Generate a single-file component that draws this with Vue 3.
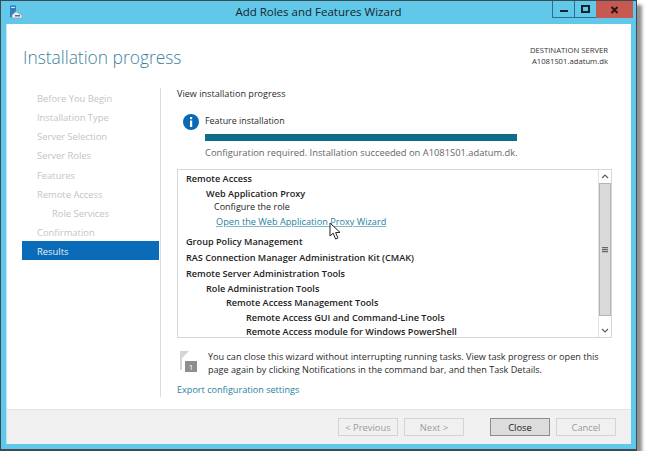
<template>
  <div class="window">
    <!-- title bar -->
    <div class="titlebar">
      <svg class="app-icon" width="14" height="14" viewBox="0 0 14 14">
        <rect x="1" y="0.5" width="6" height="12" fill="#2f7fc1" />
        <rect x="2" y="2" width="4" height="1" fill="#cfe6f5" />
        <path d="M3 13 L3 10 L7 6.5 L13 10.5 L13 13 Z" fill="#e8eef2" stroke="#8a9aa6" stroke-width="0.6" />
        <rect x="6" y="10" width="5" height="1.5" fill="#5a6a76" />
      </svg>
      <span class="title">Add Roles and Features Wizard</span>
      <div class="controls">
        <div class="ctl"><span class="min-glyph"></span></div>
        <div class="ctl"><span class="max-glyph"></span></div>
        <div class="ctl close-ctl">
          <svg width="9" height="8" viewBox="0 0 9 8"><path d="M1.5 1 L7.5 7 M7.5 1 L1.5 7" stroke="#2b1513" stroke-width="2" /></svg>
        </div>
      </div>
    </div>

    <div class="client">
      <div class="head">
        <h1>Installation progress</h1>
        <div class="dest">
          <div>DESTINATION SERVER</div>
          <div>A1081S01.adatum.dk</div>
        </div>
      </div>

      <div class="main">
        <nav class="nav">
          <div
            v-for="step in steps"
            :key="step.label"
            class="step"
            :class="{ sub: step.sub, active: step.active }"
          >{{ step.label }}</div>
        </nav>

        <div class="content">
          <div class="lead">View installation progress</div>

          <div class="feature">
            <svg class="info" width="16" height="16" viewBox="0 0 16 16">
              <circle cx="8" cy="8" r="8" fill="#0a68b4" />
              <rect x="7" y="3" width="2.2" height="2.2" fill="#fff" />
              <rect x="7" y="6.5" width="2.2" height="6.5" fill="#fff" />
            </svg>
            <div class="feature-body">
              <div class="feature-name">Feature installation</div>
              <div class="bar"></div>
              <div class="status">Configuration required. Installation succeeded on A1081S01.adatum.dk.</div>
            </div>
          </div>

          <div class="box">
            <div class="list">
              <div
                v-for="row in rows"
                :key="row.text"
                class="row"
                :class="row.cls"
              >{{ row.text }}</div>
            </div>
            <div class="scrollbar">
              <div class="arrow">
                <svg width="8" height="5" viewBox="0 0 8 5"><path d="M1 4 L4 1 L7 4" fill="none" stroke="#606060" stroke-width="1.2" /></svg>
              </div>
              <div class="thumb"><span class="grip"></span></div>
              <div class="track"></div>
              <div class="arrow">
                <svg width="8" height="5" viewBox="0 0 8 5"><path d="M1 1 L4 4 L7 1" fill="none" stroke="#606060" stroke-width="1.2" /></svg>
              </div>
            </div>
            <svg class="cursor" width="13" height="19" viewBox="0 0 13 19">
              <path d="M1 1 L1 14 L4.2 11.2 L6.6 17 L9 16 L6.6 10.6 L11 10.4 Z" fill="#fff" stroke="#222" stroke-width="1" />
            </svg>
          </div>

          <div class="note">
            <svg class="flag" width="19" height="22" viewBox="0 0 19 22">
              <path d="M1 1 L10 1 L3 8 L3 20 L1 20 Z" fill="#d4d4d4" />
              <rect x="6" y="11" width="12" height="11" fill="#8e8e8e" />
              <text x="12" y="20" font-size="8" fill="#fff" text-anchor="middle" font-family="Open Sans, sans-serif">1</text>
            </svg>
            <p>You can close this wizard without interrupting running tasks. View task progress or open this page again by clicking Notifications in the command bar, and then Task Details.</p>
          </div>

          <a class="export">Export configuration settings</a>
        </div>
      </div>

      <div class="footer">
        <button class="btn" disabled>&lt; Previous</button>
        <button class="btn" disabled>Next &gt;</button>
        <button class="btn primary">Close</button>
        <button class="btn" disabled>Cancel</button>
      </div>
    </div>
  </div>
</template>

<script setup>
const steps = [
  { label: 'Before You Begin' },
  { label: 'Installation Type' },
  { label: 'Server Selection' },
  { label: 'Server Roles' },
  { label: 'Features' },
  { label: 'Remote Access' },
  { label: 'Role Services', sub: true },
  { label: 'Confirmation' },
  { label: 'Results', active: true }
]

const rows = [
  { text: 'Remote Access', cls: 'lv0' },
  { text: 'Web Application Proxy', cls: 'lv1' },
  { text: 'Configure the role', cls: 'cfg' },
  { text: 'Open the Web Application Proxy Wizard', cls: 'link' },
  { text: 'Group Policy Management', cls: 'lv0 gap wide' },
  { text: 'RAS Connection Manager Administration Kit (CMAK)', cls: 'lv0 wide' },
  { text: 'Remote Server Administration Tools', cls: 'lv0' },
  { text: 'Role Administration Tools', cls: 'lv1 tight' },
  { text: 'Remote Access Management Tools', cls: 'lv2' },
  { text: 'Remote Access GUI and Command-Line Tools', cls: 'lv3 tight' },
  { text: 'Remote Access module for Windows PowerShell', cls: 'lv3' }
]
</script>

<style>
html, body {
  background: #fff;
}
</style>

<style scoped>
.window {
  width: 637px;
  height: 451px;
  box-sizing: border-box;
  display: flex;
  flex-direction: column;
  background: #62c8ea;
  border: 1px solid #3c4a52;
  border-bottom-width: 2px;
  box-shadow: 5px 5px 3px rgba(70, 70, 70, 0.6);
  font-family: "Open Sans", sans-serif;
  font-size: 9.1px;
  color: #2a2a2a;
}

.titlebar {
  height: 23px;
  flex: none;
  position: relative;
  display: flex;
  align-items: flex-start;
  padding-left: 8px;
}

.app-icon {
  margin-top: 4px;
}

.title {
  position: absolute;
  left: 0;
  right: 0;
  top: 3px;
  text-align: center;
  font-size: 11.5px;
  color: #14242c;
}

.controls {
  margin-left: auto;
  margin-right: 3px;
  display: flex;
  height: 17px;
  position: relative;
}

.ctl {
  width: 21px;
  display: flex;
  align-items: center;
  justify-content: center;
  border: 1px solid #2a6f8a;
  border-top: none;
  border-right: none;
}

.close-ctl {
  width: 37px;
  background: #c75a50;
  border: none;
}

.min-glyph {
  width: 8px;
  height: 2px;
  margin-top: 3px;
  background: #14242c;
}

.max-glyph {
  width: 5px;
  height: 4px;
  border: 2px solid #14242c;
}

.client {
  flex: 1;
  min-height: 0;
  margin: 0 5px 5px;
  display: flex;
  flex-direction: column;
  background: #fff;
  border-left: 1px solid #b9e6f5;
}

.head {
  height: 56px;
  flex: none;
  display: flex;
  justify-content: space-between;
  padding: 0 23px 0 16px;
}

h1 {
  margin: 20px 0 0;
  font-size: 17.4px;
  font-weight: 300;
  line-height: 26px;
  color: #3f7fa0;
}

.dest {
  margin-top: 21px;
  text-align: right;
  font-size: 7.7px;
  line-height: 11px;
  color: #333;
}

.main {
  flex: 1;
  min-height: 0;
  display: flex;
}

.nav {
  width: 137px;
  margin-left: 15px;
  padding-top: 8px;
  flex: none;
  font-size: 9.4px;
}

.step {
  height: 19.15px;
  line-height: 21px;
  padding-left: 15px;
  color: #c4c4c4;
}

.step.sub {
  padding-left: 30px;
}

.step.active {
  background: #0a6cb8;
  color: #e6f1f9;
}

.content {
  flex: 1;
  min-width: 0;
  margin-top: 8px;
  margin-bottom: 12px;
  margin-left: 1px;
  padding-left: 16px;
  padding-right: 19px;
  border-left: 1px solid #dcdcdc;
  display: flex;
  flex-direction: column;
}

.lead {
  line-height: 12px;
}

.feature {
  display: flex;
  margin-top: 14px;
  padding-left: 6px;
}

.info {
  flex: none;
}

.feature-body {
  margin-left: 6px;
  flex: 1;
}

.feature-name {
  line-height: 13px;
  font-size: 8.9px;
}

.bar {
  width: 312px;
  height: 7px;
  margin-top: 7px;
  background: #0f6d8c;
}

.status {
  margin-top: 5px;
  line-height: 14px;
  font-size: 9.35px;
  color: #666;
}

.box {
  position: relative;
  margin-top: 9px;
  height: 169px;
  box-sizing: border-box;
  display: flex;
  border: 1px solid #d6d6d6;
}

.list {
  flex: 1;
  padding: 2px 0 0 8px;
  min-width: 0;
}

.row {
  line-height: 14px;
  margin-bottom: 1px;
  font-size: 9.15px;
  font-weight: 600;
  color: #222;
  white-space: nowrap;
}

.wide {
  margin-bottom: 2px;
}

.tight {
  margin-bottom: 0;
}

.lv1 {
  padding-left: 20px;
}

.lv2 {
  padding-left: 40px;
}

.lv3 {
  padding-left: 60px;
}

.cfg {
  padding-left: 28px;
  margin-top: -2px;
  font-size: 9px;
  font-weight: 400;
}

.link {
  padding-left: 30px;
  font-size: 9.18px;
  font-weight: 400;
  color: #1f7f9e;
  text-decoration: underline;
  text-decoration-color: #7fb9cc;
}

.gap {
  margin-top: 6px;
}

.scrollbar {
  width: 12px;
  flex: none;
  display: flex;
  flex-direction: column;
  border-left: 1px solid #e2e2e2;
}

.arrow {
  height: 13px;
  flex: none;
  display: flex;
  align-items: center;
  justify-content: center;
}

.thumb {
  flex: 1;
  display: flex;
  align-items: center;
  justify-content: center;
  background: #dadada;
  border: 1px solid #b4b4b4;
}

.grip {
  width: 6px;
  height: 6px;
  background: repeating-linear-gradient(#666 0 1px, #bbb 1px 2px);
}

.track {
  height: 8px;
  flex: none;
}

.cursor {
  position: absolute;
  left: 151px;
  top: 52px;
}

.note {
  display: flex;
  margin-top: 12px;
  padding-left: 2px;
}

.flag {
  flex: none;
}

.note p {
  margin: 0 0 0 10px;
  line-height: 13px;
  color: #2a2a2a;
}

.export {
  margin-top: 7px;
  line-height: 14px;
  color: #1f7f9e;
}

.footer {
  height: 35px;
  flex: none;
  box-sizing: border-box;
  display: flex;
  align-items: center;
  gap: 6px;
  padding: 0 15px 0 0;
  justify-content: flex-end;
  background: #f0f0f0;
  border-top: 1px solid #e3e3e3;
}

.btn {
  width: 60px;
  height: 18px;
  box-sizing: border-box;
  padding: 0;
  border: 1px solid #d4d4d4;
  background: #f0f0f0;
  font-family: inherit;
  font-size: 9.4px;
  color: #9c9c9c;
}

.primary {
  margin-left: 20px;
  background: #dcdcdc;
  border-color: #8c8c8c;
  color: #222;
}
</style>
